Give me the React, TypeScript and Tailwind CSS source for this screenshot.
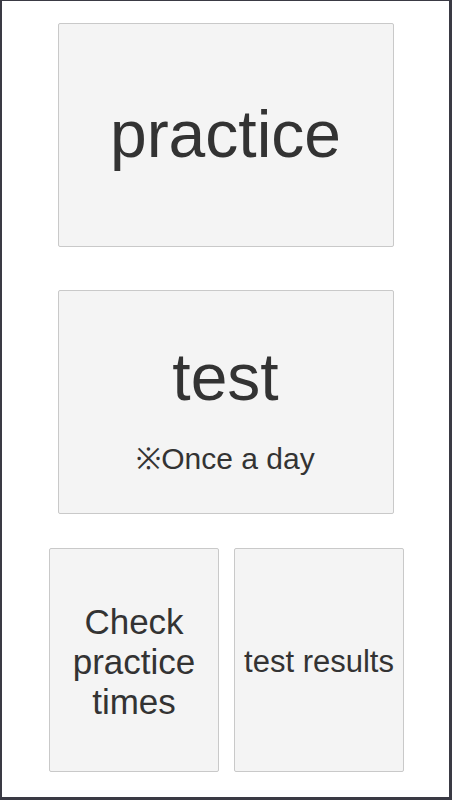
import React from "react";

export default function App() {
  const box =
    "bg-[#f4f4f4] border border-[#c9c9c9] rounded-[2px] flex items-center justify-center text-[#333333]";
  return (
    <div
      className="w-[452px] h-[800px] bg-white border-t border-l-2 border-r-[3px] border-b-[3px] border-[#3a3a44] flex flex-col items-center"
      style={{ fontFamily: '"Liberation Sans", Arial, sans-serif' }}
    >
      <div className={`${box} mt-[22px] w-[336px] h-[224px] text-[66px]`}>
        <span className="leading-none -mt-[2px]">practice</span>
      </div>
      <div className="mt-[43px] w-[336px] h-[224px] bg-[#f4f4f4] border border-[#c9c9c9] rounded-[2px] flex flex-col items-center text-[#333333] pt-[53px]">
        <span className="text-[66px] leading-none">test</span>
        <span className="text-[30px] leading-none mt-[34px]">※Once a day</span>
      </div>
      <div className="mt-[34px] flex gap-[15px] ml-[2px]">
        <div className={`${box} w-[170px] h-[224px] text-[35px] leading-[40px] text-center`}>
          <span className="mt-[4px]">
            Check
            <br />
            practice
            <br />
            times
          </span>
        </div>
        <div className={`${box} w-[170px] h-[224px] text-[31px]`}>
          <span className="leading-none mt-[2px]">test results</span>
        </div>
      </div>
    </div>
  );
}
